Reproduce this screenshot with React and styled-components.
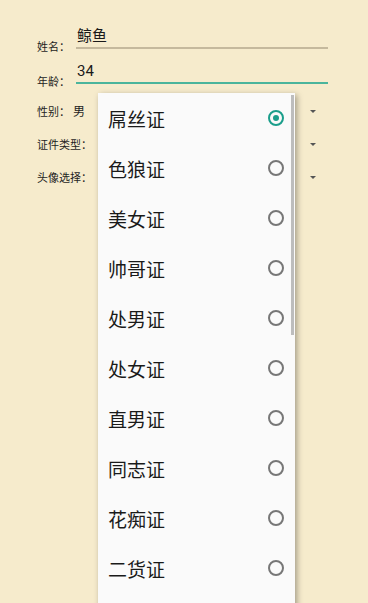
import React from "react";
import styled, { createGlobalStyle } from "styled-components";

const GlobalStyle = createGlobalStyle`
	html, body {
		margin: 0;
		padding: 0;
		background: #f6ebcc;
	}
	body {
		font-family: Roboto, "Noto Sans CJK SC", sans-serif;
		color: #333;
	}
`;

const Page = styled("div")`
	position: relative;
	width: 368px;
	height: 603px;
	overflow: hidden;
	background: #f6ebcc;
`;

const Form = styled("div")`
	display: flex;
	flex-direction: column;
	gap: 8px;
	padding: 25px 40px 0 37px;
`;

const Row = styled("div")`
	display: flex;
	align-items: flex-end;
`;

const Label = styled("span")`
	font-size: 11px;
	line-height: 14px;
	color: #1e1e1e;
	white-space: nowrap;
`;

const RowLabel = styled(Label)`
	margin-bottom: -3px;
`;

const Field = styled("div")`
	flex: 1;
	margin-left: 6px;
	margin-bottom: 3px;
	font-size: 15px;
	line-height: 22px;
	color: #1a1a1a;
	padding-left: 1px;
	border-bottom: ${(p) => (p.focused ? "2px solid #4bb59c" : "2px solid #c5b99d")};
`;

const Spinners = styled("div")`
	display: flex;
	flex-direction: column;
	margin-top: 1px;
`;

const SpinnerRow = styled("div")`
	display: flex;
	align-items: center;
	height: 33px;
`;

const Value = styled("span")`
	flex: 1;
	margin-left: 3px;
	margin-top: -5px;
	font-size: 12px;
	color: #1e1e1e;
`;

const Arrow = styled("span")`
	width: 0;
	height: 0;
	margin-right: 12px;
	margin-top: -3px;
	border-left: 3px solid transparent;
	border-right: 3px solid transparent;
	border-top: 3px solid #555;
`;

const Popup = styled("div")`
	position: absolute;
	left: 98px;
	top: 93px;
	width: 197px;
	height: 530px;
	background: #fafafa;
	box-shadow: 2px 2px 6px rgba(0, 0, 0, 0.35);
`;

const Option = styled("div")`
	display: flex;
	align-items: center;
	justify-content: space-between;
	height: 50px;
	padding: 0 11px 0 10px;
	font-family: "Noto Sans CJK SC", sans-serif;
	font-size: 19px;
	color: #1a1a1a;
`;

const Radio = styled("span")`
	position: relative;
	width: 12px;
	height: 12px;
	border-radius: 50%;
	border: 2px solid ${(p) => (p.checked ? "#1b9e8b" : "#777")};

	&::after {
		content: "";
		display: ${(p) => (p.checked ? "block" : "none")};
		position: absolute;
		left: 3px;
		top: 3px;
		width: 6px;
		height: 6px;
		border-radius: 50%;
		background: #1b9e8b;
	}
`;

const Scrollbar = styled("div")`
	position: absolute;
	right: 1px;
	top: 2px;
	width: 3px;
	height: 240px;
	background: #bdbdbd;
`;

const options = ["屌丝证", "色狼证", "美女证", "帅哥证", "处男证", "处女证", "直男证", "同志证", "花痴证", "二货证"];

const spinners = [
	{ label: "性别：", value: "男" },
	{ label: "证件类型：", value: "" },
	{ label: "头像选择：", value: "" },
];

const App = () => (
	<Page>
		<GlobalStyle />
		<Form>
			<Row>
				<RowLabel>姓名：</RowLabel>
				<Field>鲸鱼</Field>
			</Row>
			<Row>
				<RowLabel>年龄：</RowLabel>
				<Field focused>34</Field>
			</Row>
			<Spinners>
				{spinners.map((s) => (
					<SpinnerRow key={s.label}>
						<Label>{s.label}</Label>
						<Value>{s.value}</Value>
						<Arrow />
					</SpinnerRow>
				))}
			</Spinners>
		</Form>
		<Popup>
			{options.map((o, i) => (
				<Option key={o}>
					{o}
					<Radio checked={i === 0} />
				</Option>
			))}
			<Scrollbar />
		</Popup>
	</Page>
);

export default App;
